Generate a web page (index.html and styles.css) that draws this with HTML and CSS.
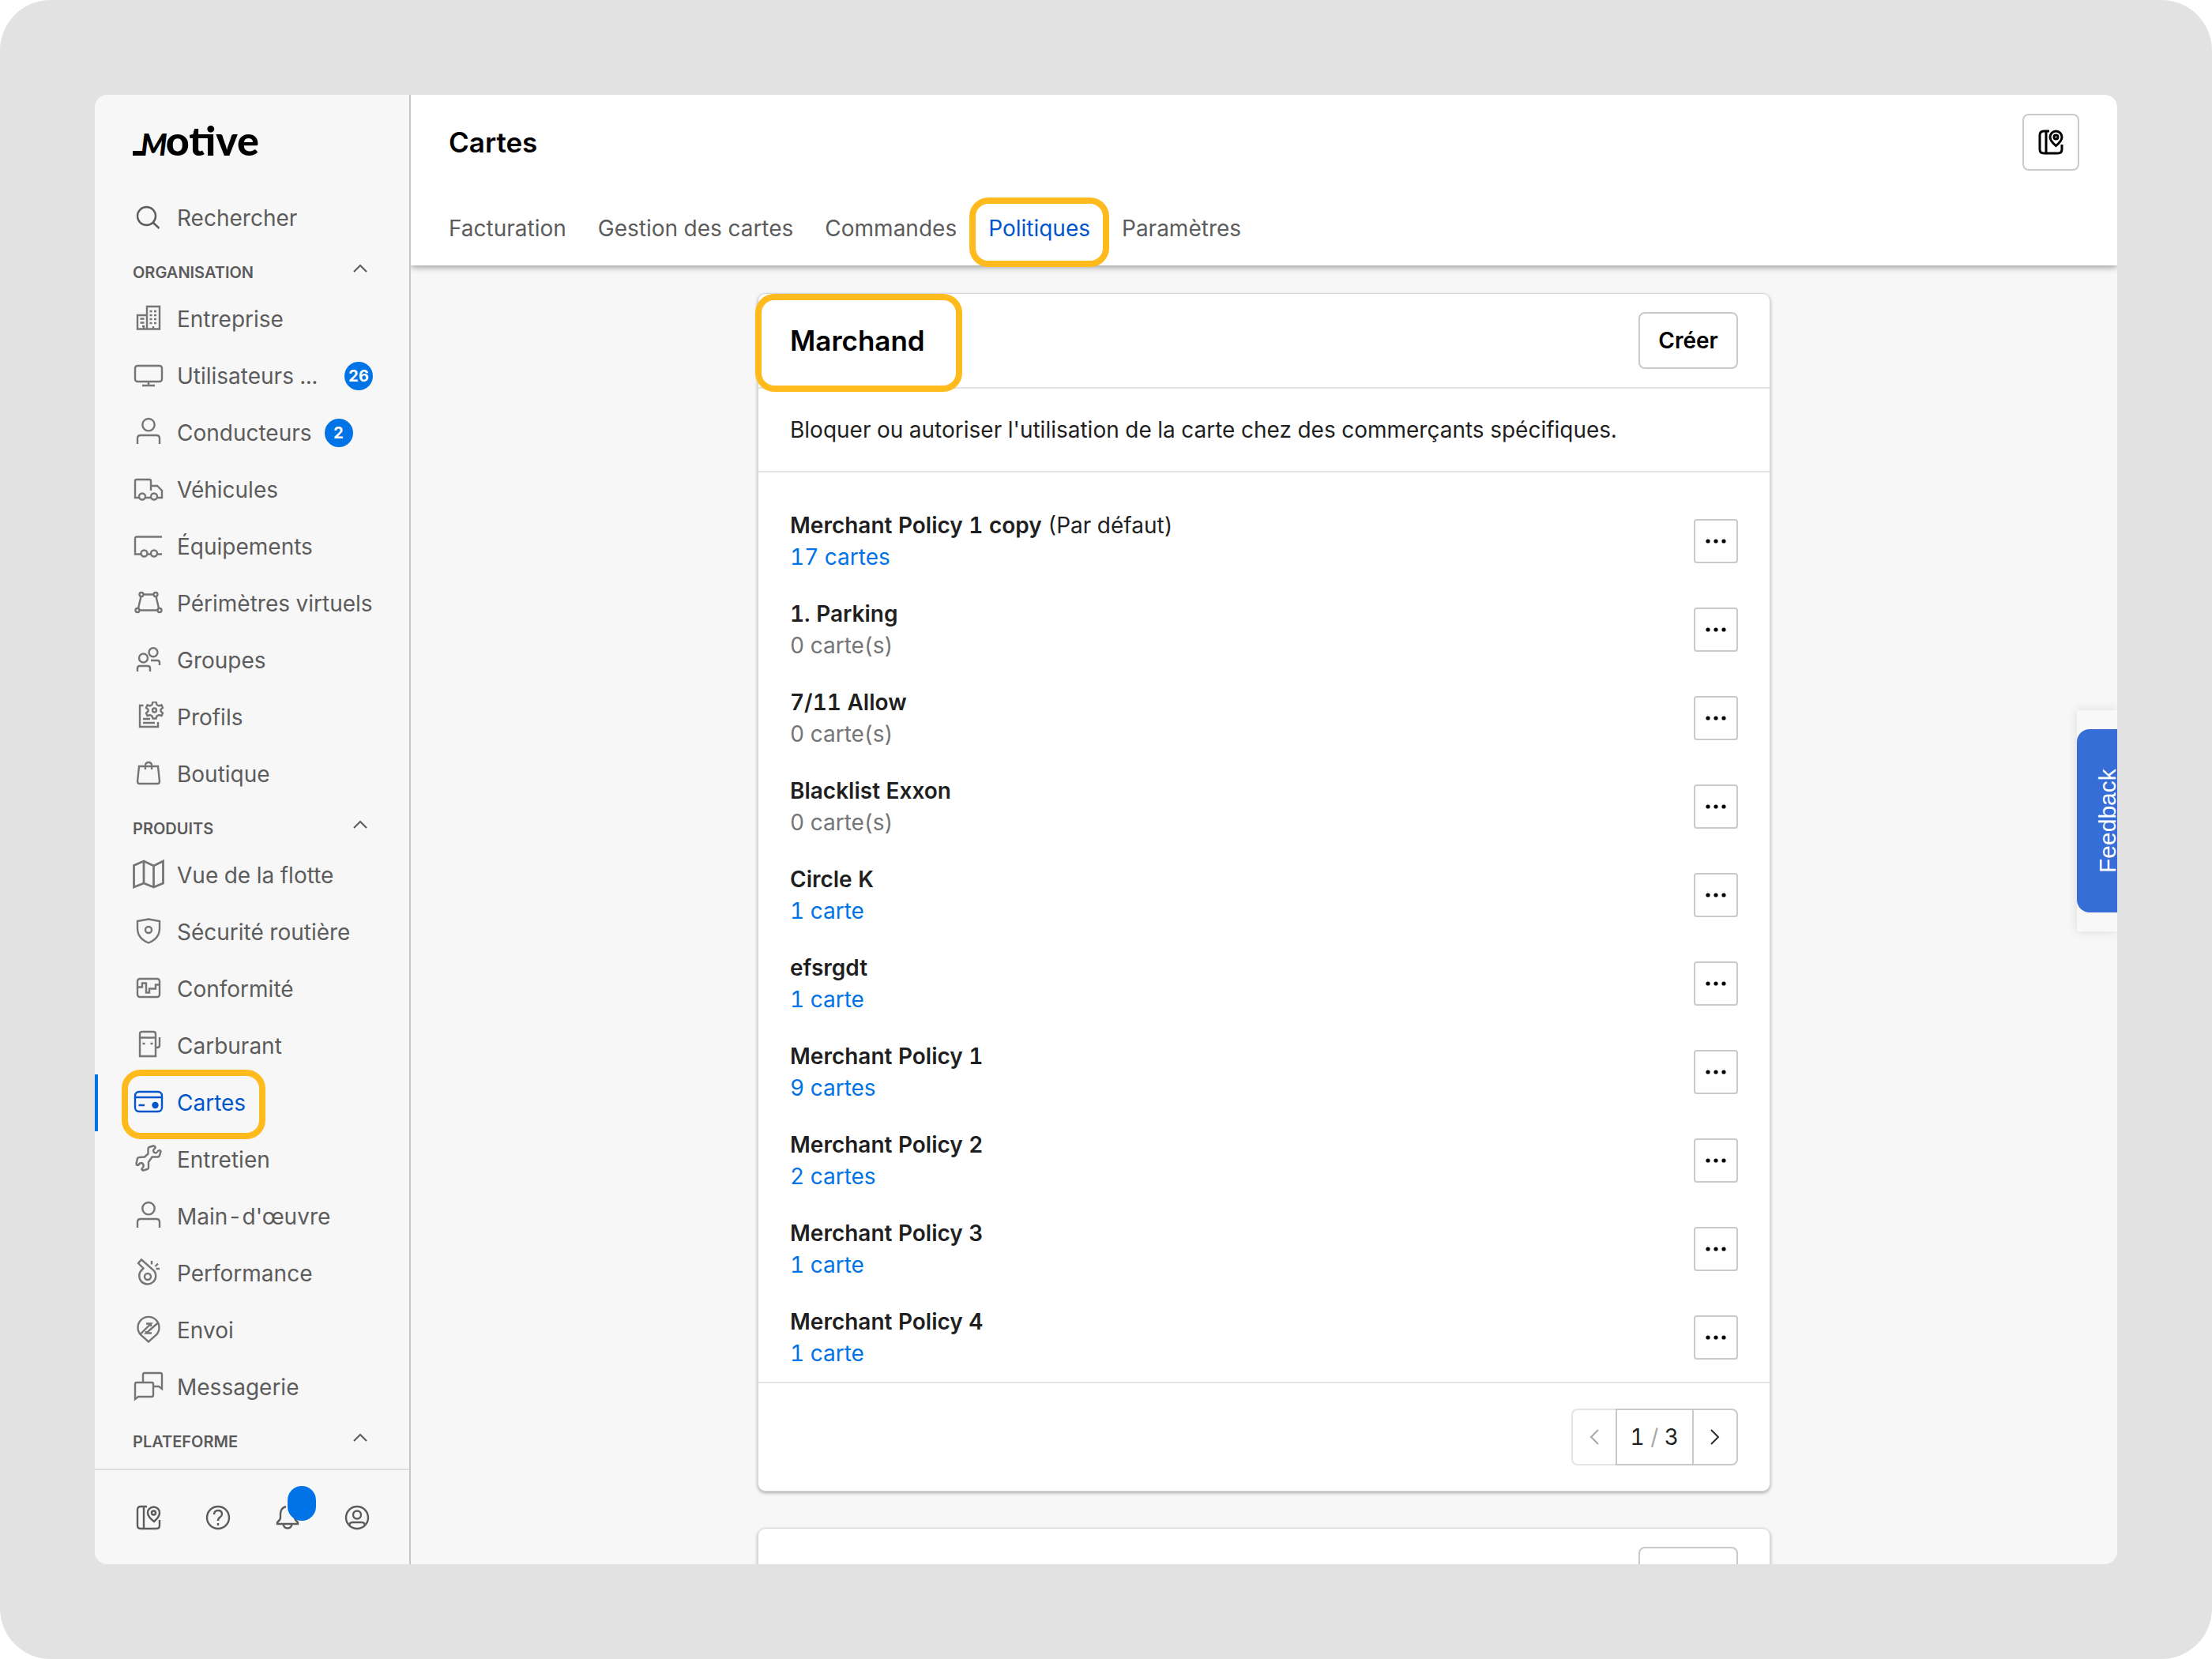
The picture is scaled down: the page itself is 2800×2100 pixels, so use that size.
FILE: index.html
```html
<!DOCTYPE html>
<html lang="fr">
<head>
    <meta charset="UTF-8">
    <meta name="viewport" content="width=device-width, initial-scale=1.0">
    <title>Motive - Cartes</title>
    <link rel="stylesheet" href="styles.css">
</head>
<body>
    <div class="app">
        <aside class="sidebar">
            <a href="/" class="logo"><span class="logo-m">M</span><span class="logo-rest">otive</span></a>

            <nav class="menu">
                <a href="#" class="menu-item">
                    <svg class="icon icon-dark" viewBox="0 0 40 40"><circle cx="17.500" cy="17.500" r="11.500"/><path d="M25.500 25.500l8 7.500"/></svg>
                    <span>Rechercher</span>
                </a>

                <button class="menu-title" type="button">
                    <span>ORGANISATION</span>
                    <svg class="chevron" viewBox="0 0 32 20"><path d="M8 14l8-8 8 8"/></svg>
                </button>
                <a href="#" class="menu-item">
                    <svg class="icon" viewBox="0 0 40 40"><path d="M6 32.500V15h12v17.500zM18 32.500V4h16v28.500z"/><path d="M9.500 19.500h5M9.500 24.500h5M12 29h2v3M21.500 10h3M27 10h3M21.500 15h3M27 15h3M21.500 20h3M27 20h3M21.500 25h3M27 25h3M26 29v3"/></svg>
                    <span>Entreprise</span>
                </a>
                <a href="#" class="menu-item">
                    <svg class="icon" viewBox="0 0 40 40"><rect x="3" y="7" width="34" height="20" rx="3"/><path d="M20 27v5M12 32h16"/></svg>
                    <span class="grow">Utilisateurs ...</span>
                    <span class="badge">26</span>
                </a>
                <a href="#" class="menu-item">
                    <svg class="icon" viewBox="0 0 40 40"><circle cx="20" cy="9.700" r="7.700"/><path d="M6 34v-7q0-4 4-4h20q4 0 4 4v7"/></svg>
                    <span>Conducteurs</span>
                    <span class="badge">2</span>
                </a>
                <a href="#" class="menu-item">
                    <svg class="icon" viewBox="0 0 40 40"><path d="M8 30H3V9q0-2 2-2h16q2 0 2 2v12M16 30h7M31 30h6v-9l-6-6h-8"/><circle cx="12" cy="28.500" r="4"/><circle cx="27" cy="28.500" r="4"/></svg>
                    <span>Véhicules</span>
                </a>
                <a href="#" class="menu-item">
                    <svg class="icon" viewBox="0 0 40 40"><path d="M37 7.500H5q-2 0-2 2v20h7.500M18.500 29.500h4.500M31 29.500h6"/><circle cx="14.500" cy="28.500" r="4"/><circle cx="27" cy="28.500" r="4"/></svg>
                    <span>Équipements</span>
                </a>
                <a href="#" class="menu-item">
                    <svg class="icon" viewBox="0 0 40 40"><circle cx="11" cy="8.500" r="2.500"/><circle cx="29" cy="8.500" r="2.500"/><circle cx="6" cy="28.500" r="2.500"/><circle cx="34" cy="28.500" r="2.500"/><path d="M13.500 8.500h13M8.500 28.500h23M10.500 11L7 26M29.500 11L33 26"/></svg>
                    <span>Périmètres virtuels</span>
                </a>
                <a href="#" class="menu-item">
                    <svg class="icon" viewBox="0 0 40 40"><circle cx="13.500" cy="17" r="5.500"/><circle cx="26" cy="9.700" r="5.500"/><path d="M6 34v-4q0-3 3-3h10q3 0 3 3v4M23 20h8q3 0 3 3v3"/></svg>
                    <span>Groupes</span>
                </a>
                <a href="#" class="menu-item">
                    <svg class="icon" viewBox="0 0 40 40"><path d="M13.500 5H9v27h23v-6M13 22h9M13 27h15"/><path d="M25.500.500h4l1 3.500 2.500 1.500 3.500-1 1.500 3.500-2.500 2v2.500l2.500 2-1.500 3.500-3.500-1-2.500 1.500-1 3h-4l-1-3-2.500-1.500-3.500 1-1.500-3.500 2.500-2V10l-2.500-2L18.500 4.500l3.500 1L24.500 4z"/><circle cx="27.500" cy="11" r="2.500"/></svg>
                    <span>Profils</span>
                </a>
                <a href="#" class="menu-item">
                    <svg class="icon" viewBox="0 0 40 40"><path d="M8 10h24l2 19q0 3-3 3H9q-3 0-3-3zM16 14V9q0-4 4-4t4 4v5"/></svg>
                    <span>Boutique</span>
                </a>

                <button class="menu-title" type="button">
                    <span>PRODUITS</span>
                    <svg class="chevron" viewBox="0 0 32 20"><path d="M8 14l8-8 8 8"/></svg>
                </button>
                <a href="#" class="menu-item">
                    <svg class="icon" viewBox="0 0 40 40"><path class="thick" d="M1.500 7.500L14 2l12.500 6L38.500 2v28L26.500 35 14 30 1.500 35zM14 2v28M26.500 8v27"/></svg>
                    <span>Vue de la flotte</span>
                </a>
                <a href="#" class="menu-item">
                    <svg class="icon" viewBox="0 0 40 40"><path d="M6 6l14-2.500L34 6v9q0 13-14 18.500Q6 28 6 15z"/><circle cx="20" cy="17" r="4"/></svg>
                    <span>Sécurité routière</span>
                </a>
                <a href="#" class="menu-item">
                    <svg class="icon" viewBox="0 0 40 40"><rect x="6" y="7" width="28" height="23" rx="3"/><path d="M6 17.500h6v-5h5v12h4v-5h8v-5h5"/></svg>
                    <span>Conformité</span>
                </a>
                <a href="#" class="menu-item">
                    <svg class="icon" viewBox="0 0 40 40"><path d="M9 33V5q0-3 3-3h14q3 0 3 3v28zM9 9.500h20M29 22h2q3 0 3-3V9M12.500 17h3M22.500 17h3"/></svg>
                    <span>Carburant</span>
                </a>
                <a href="#" class="menu-item active">
                    <svg class="icon" viewBox="0 0 40 40"><rect x="3" y="6" width="34" height="25" rx="5"/><path d="M3 13h34M7.500 23h7.500"/><circle class="dot" cx="28.500" cy="23" r="3"/></svg>
                    <span>Cartes</span>
                    <i class="highlight highlight-menu"></i>
                </a>
                <a href="#" class="menu-item">
                    <svg class="icon" viewBox="0 0 40 40"><path d="M19.500 6.500q0-2 1.500-2.500l5-1.500q2 0 2.500 1.500t-1.500 2.500l-1 2q0 2 2.500 3 2 0 3.500-2.500 3-2 3.500.500l-1.500 5q-.5 2-2.500 2h-7L20 23v7q0 1.500-1.500 2l-5 1.500q-2 0-2-2l2-2.500q1-3-2-5-3 0-4 2.500-3 1-3-1.500L6 18.500q.5-1.500 2-1.500l7-.500 4.500-4z"/></svg>
                    <span>Entretien</span>
                </a>
                <a href="#" class="menu-item">
                    <svg class="icon" viewBox="0 0 40 40"><circle cx="20" cy="9.700" r="7.700"/><path d="M6 34v-7q0-4 4-4h20q4 0 4 4v7"/></svg>
                    <span>Main-d'œuvre</span>
                </a>
                <a href="#" class="menu-item">
                    <svg class="icon" viewBox="0 0 40 40"><path d="M11 2.500l15.500 13.500a10.500 10.500 0 1 1-14.500-1l1.500-1.500L7 7z"/><circle cx="19" cy="24" r="4"/><path d="M24 4v4.500M32 7.500l-3.500 3.500M29.500 14h4.500"/></svg>
                    <span>Performance</span>
                </a>
                <a href="#" class="menu-item">
                    <svg class="icon" viewBox="0 0 40 40"><path d="M20 34.500l-9.500-8.500a13.500 13.500 0 1 1 19 0zM9 25.500l14-14h-6M32 10.500l-15 13h7M23 11.500v3.500M17 24v-3"/></svg>
                    <span>Envoi</span>
                </a>
                <a href="#" class="menu-item">
                    <svg class="icon" viewBox="0 0 40 40"><path d="M13 13V4q0-2 2-2h20q2 0 2 2v18l-4-3h-6"/><path d="M3 35V16q0-2 2-2h19q2 0 2 2v14q0 2-2 2H7z"/></svg>
                    <span>Messagerie</span>
                </a>

                <button class="menu-title" type="button">
                    <span>PLATEFORME</span>
                    <svg class="chevron" viewBox="0 0 32 20"><path d="M8 14l8-8 8 8"/></svg>
                </button>
            </nav>

            <div class="sidebar-footer">
                <button class="tool" type="button" aria-label="Guide">
                    <svg class="icon icon-dark" viewBox="0 0 40 40"><path d="M18 6h-8q-4 0-4 4v20q0 4 4 4h20q4 0 4-4v-7M14 6v28M27 25q-8-6-8-11a7.500 7.500 0 0 1 15 0q0 5-7 11z"/><circle cx="26.500" cy="14" r="2.500"/></svg>
                </button>
                <button class="tool" type="button" aria-label="Aide">
                    <svg class="icon icon-dark" viewBox="0 0 40 40"><circle cx="20" cy="20" r="14"/><path d="M15 16q0-5 5-5t5 4.500q0 2.500-2.500 4T20 24M20 27v3"/></svg>
                </button>
                <button class="tool" type="button" aria-label="Notifications">
                    <svg class="icon icon-dark" viewBox="0 0 40 40"><path d="M18 6q-7 2-7 9v5q0 3-4 6v2h26v-2q-4-3-4-6v-5M14.500 28.500q1 5 5.500 5t5.500-5"/></svg>
                    <i class="tool-badge"></i>
                </button>
                <button class="tool" type="button" aria-label="Compte">
                    <svg class="icon icon-dark" viewBox="0 0 40 40"><circle cx="20" cy="20" r="14"/><circle cx="20" cy="16.500" r="5"/><path d="M10.500 30v-2q1-2 4-2h11q3 0 4 2v2"/></svg>
                </button>
            </div>
        </aside>

        <div class="main">
            <header class="header">
                <div class="header-top">
                    <h1>Cartes</h1>
                    <button class="btn btn-guide" type="button" aria-label="Guide">
                        <svg class="icon icon-black" viewBox="0 0 40 40"><path d="M18 6h-7q-5 0-5 5v18q0 5 5 5h18q5 0 5-5v-6M14 6v28M26.500 24.500q-7.500-6-7.500-11a7.500 7.500 0 0 1 15 0q0 5-7.500 11z"/><circle cx="26.500" cy="13.500" r="2.500"/></svg>
                    </button>
                </div>
                <nav class="tabs">
                    <a href="#">Facturation</a>
                    <a href="#">Gestion des cartes</a>
                    <a href="#">Commandes</a>
                    <a href="#" class="active">Politiques<i class="highlight highlight-tab"></i></a>
                    <a href="#">Paramètres</a>
                </nav>
            </header>

            <main class="content">
                <section class="card">
                    <div class="card-header">
                        <h2>Marchand</h2>
                        <button class="btn" type="button">Créer</button>
                        <i class="highlight highlight-title"></i>
                    </div>
                    <p class="card-text">Bloquer ou autoriser l'utilisation de la carte chez des commerçants spécifiques.</p>
                    <ul class="policies">
                        <li>
                            <div class="policy"><div><b>Merchant Policy 1 copy</b> (Par défaut)</div><a href="#">17 cartes</a></div>
                            <button class="btn btn-more" type="button" aria-label="Plus"><svg viewBox="0 0 26 6"><circle cx="3" cy="3" r="2.600"/><circle cx="13" cy="3" r="2.600"/><circle cx="23" cy="3" r="2.600"/></svg></button>
                        </li>
                        <li>
                            <div class="policy"><b>1. Parking</b><span>0 carte(s)</span></div>
                            <button class="btn btn-more" type="button" aria-label="Plus"><svg viewBox="0 0 26 6"><circle cx="3" cy="3" r="2.600"/><circle cx="13" cy="3" r="2.600"/><circle cx="23" cy="3" r="2.600"/></svg></button>
                        </li>
                        <li>
                            <div class="policy"><b>7/11 Allow</b><span>0 carte(s)</span></div>
                            <button class="btn btn-more" type="button" aria-label="Plus"><svg viewBox="0 0 26 6"><circle cx="3" cy="3" r="2.600"/><circle cx="13" cy="3" r="2.600"/><circle cx="23" cy="3" r="2.600"/></svg></button>
                        </li>
                        <li>
                            <div class="policy"><b>Blacklist Exxon</b><span>0 carte(s)</span></div>
                            <button class="btn btn-more" type="button" aria-label="Plus"><svg viewBox="0 0 26 6"><circle cx="3" cy="3" r="2.600"/><circle cx="13" cy="3" r="2.600"/><circle cx="23" cy="3" r="2.600"/></svg></button>
                        </li>
                        <li>
                            <div class="policy"><b>Circle K</b><a href="#">1 carte</a></div>
                            <button class="btn btn-more" type="button" aria-label="Plus"><svg viewBox="0 0 26 6"><circle cx="3" cy="3" r="2.600"/><circle cx="13" cy="3" r="2.600"/><circle cx="23" cy="3" r="2.600"/></svg></button>
                        </li>
                        <li>
                            <div class="policy"><b>efsrgdt</b><a href="#">1 carte</a></div>
                            <button class="btn btn-more" type="button" aria-label="Plus"><svg viewBox="0 0 26 6"><circle cx="3" cy="3" r="2.600"/><circle cx="13" cy="3" r="2.600"/><circle cx="23" cy="3" r="2.600"/></svg></button>
                        </li>
                        <li>
                            <div class="policy"><b>Merchant Policy 1</b><a href="#">9 cartes</a></div>
                            <button class="btn btn-more" type="button" aria-label="Plus"><svg viewBox="0 0 26 6"><circle cx="3" cy="3" r="2.600"/><circle cx="13" cy="3" r="2.600"/><circle cx="23" cy="3" r="2.600"/></svg></button>
                        </li>
                        <li>
                            <div class="policy"><b>Merchant Policy 2</b><a href="#">2 cartes</a></div>
                            <button class="btn btn-more" type="button" aria-label="Plus"><svg viewBox="0 0 26 6"><circle cx="3" cy="3" r="2.600"/><circle cx="13" cy="3" r="2.600"/><circle cx="23" cy="3" r="2.600"/></svg></button>
                        </li>
                        <li>
                            <div class="policy"><b>Merchant Policy 3</b><a href="#">1 carte</a></div>
                            <button class="btn btn-more" type="button" aria-label="Plus"><svg viewBox="0 0 26 6"><circle cx="3" cy="3" r="2.600"/><circle cx="13" cy="3" r="2.600"/><circle cx="23" cy="3" r="2.600"/></svg></button>
                        </li>
                        <li>
                            <div class="policy"><b>Merchant Policy 4</b><a href="#">1 carte</a></div>
                            <button class="btn btn-more" type="button" aria-label="Plus"><svg viewBox="0 0 26 6"><circle cx="3" cy="3" r="2.600"/><circle cx="13" cy="3" r="2.600"/><circle cx="23" cy="3" r="2.600"/></svg></button>
                        </li>
                    </ul>
                    <div class="card-footer">
                        <button class="page-btn page-prev" type="button" aria-label="Page précédente" disabled><svg viewBox="0 0 14 24"><path d="M12 3l-9 9 9 9"/></svg></button>
                        <div class="page-count">1 <span>/</span> 3</div>
                        <button class="page-btn page-next" type="button" aria-label="Page suivante"><svg viewBox="0 0 14 24"><path d="M2 3l9 9-9 9"/></svg></button>
                    </div>
                </section>

                <section class="card">
                    <div class="card-header">
                        <button class="btn" type="button" aria-label="Créer"></button>
                    </div>
                </section>
            </main>
        </div>

        <div class="feedback">
            <button type="button">Feedback</button>
        </div>
    </div>
</body>
</html>
```

FILE: styles.css
```css
* {
    box-sizing: border-box;
}
html {
    background-color: #fff;
}
body {
    margin: 0;
    height: 100vh;
    padding: 120px;
    background-color: #e2e2e2;
    border-radius: 64px;
    font-family: Inter, "Liberation Sans", sans-serif;
    font-size: 28px;
    font-variant-numeric: tabular-nums;
    line-height: 40px;
    color: #1f1f1f;
}
a {
    color: #0073e6;
    text-decoration: none;
}
button {
    font: inherit;
    color: inherit;
    cursor: pointer;
}
.app {
    position: relative;
    display: flex;
    height: 100%;
    overflow: hidden;
    border-radius: 16px;
    background-color: #f7f7f7;
}

/* sidebar */
.sidebar {
    position: relative;
    z-index: 2;
    display: flex;
    flex-direction: column;
    flex: none;
    width: 400px;
    border-right: 2px solid #c6c6c6;
    background-color: #f7f7f7;
    color: #5c5c5c;
}
.logo {
    display: flex;
    align-items: baseline;
    height: 120px;
    padding: 32px 48px 0;
    color: #000;
    font-family: Lato, sans-serif;
    font-weight: 900;
    line-height: 50px;
}
.logo::before {
    content: "";
    width: 16px;
    height: 6px;
    background-color: #000;
}
.logo-m {
    margin-left: -6px;
    font-size: 38px;
    font-style: italic;
}
.logo-rest {
    margin-left: -2px;
    font-size: 52px;
}
.menu {
    flex: 1;
    min-height: 0;
    overflow: hidden;
}
.menu-item {
    position: relative;
    display: flex;
    align-items: center;
    gap: 16px;
    height: 72px;
    padding: 0 46px 0 48px;
    color: inherit;
    white-space: nowrap;
}
.menu-item.active {
    color: #0055cc;
    border-left: 4px solid #0073e6;
    padding-left: 44px;
}
.grow {
    flex: 1;
}
.menu-title {
    display: flex;
    align-items: center;
    justify-content: space-between;
    width: 100%;
    height: 56px;
    padding: 0 46px 0 48px;
    border: 0;
    background: none;
    font-size: 20px;
    font-weight: 600;
}
.menu-title span {
    padding-top: 10px;
}
.icon {
    flex: none;
    width: 40px;
    height: 40px;
    fill: none;
    stroke: #757575;
    stroke-width: 6%;
}
.icon .thick {
    stroke-width: 7%;
}
.icon-dark {
    stroke: #5c5c5c;
}
.icon-black {
    stroke: #000;
    stroke-width: 3px;
}
.active .icon {
    stroke: #0055cc;
}
.active .dot {
    fill: #0055cc;
}
.chevron {
    width: 32px;
    height: 20px;
    fill: none;
    stroke: #5c5c5c;
    stroke-width: 2px;
}
.badge {
    min-width: 36px;
    height: 36px;
    border-radius: 18px;
    background-color: #0073e6;
    color: #fff;
    font-size: 20px;
    font-weight: 700;
    line-height: 36px;
    text-align: center;
}
.sidebar-footer {
    display: flex;
    align-items: center;
    gap: 48px;
    height: 121px;
    padding: 0 48px;
    border-top: 2px solid #dedede;
}
.tool {
    position: relative;
    display: flex;
    padding: 0;
    border: 0;
    background: none;
}
.tool-badge {
    position: absolute;
    left: 20px;
    bottom: 16px;
    width: 36px;
    height: 44px;
    border-radius: 18px;
    background-color: #0073e6;
}

/* yellow guide frames */
.highlight {
    position: absolute;
    z-index: 2;
    border: 8px solid #ffbb1e;
    border-radius: 24px;
    pointer-events: none;
}
.highlight-menu {
    left: 30px;
    top: -6px;
    width: 182px;
    height: 88px;
}
.highlight-tab {
    left: -24px;
    right: -24px;
    top: -19px;
    height: 88px;
}
.highlight-title {
    left: -4px;
    top: 0;
    width: 262px;
    height: 124px;
}

/* header */
.main {
    display: flex;
    flex-direction: column;
    flex: 1;
    min-width: 0;
}
.header {
    position: relative;
    z-index: 1;
    flex: none;
    height: 216px;
    padding: 24px 48px 0;
    background-color: #fff;
    box-shadow: 0 2px 8px rgba(0, 0, 0, 0.4);
}
.header-top {
    display: flex;
    align-items: center;
    justify-content: space-between;
}
h1,
h2 {
    margin: 0;
    color: #000;
    font-size: 35px;
    font-weight: 600;
}
.tabs {
    display: flex;
    gap: 40px;
    margin-top: 53px;
}
.tabs a {
    position: relative;
    color: #5c5c5c;
}
.tabs a.active {
    color: #0055cc;
}
.btn {
    display: flex;
    align-items: center;
    justify-content: center;
    min-width: 126px;
    height: 72px;
    padding: 0 20px;
    border: 2px solid #c9c9c9;
    border-radius: 8px;
    background-color: #fff;
    color: #000;
    font-weight: 600;
}
.btn-guide {
    min-width: 72px;
    padding: 0;
}

/* cards */
.content {
    flex: 1;
    min-height: 0;
    padding-top: 35px;
    overflow: hidden;
}
.card {
    width: 60%;
    max-width: 1282px;
    margin: 0 auto 46px;
    border: 1px solid #d6d6d6;
    border-radius: 10px;
    background-color: #fff;
    box-shadow: 0 2px 4px rgba(0, 0, 0, 0.3);
}
.card-header {
    position: relative;
    display: flex;
    align-items: center;
    height: 120px;
    padding: 0 40px;
    border-bottom: 2px solid #e4e4e4;
}
.card-header .btn {
    margin-left: auto;
}
.card-text {
    margin: 0;
    padding: 32px 40px;
    border-bottom: 2px solid #e4e4e4;
}
.policies {
    margin: 0;
    padding: 31px 40px 0;
    list-style: none;
}
.policies li {
    display: flex;
    align-items: center;
    justify-content: space-between;
    height: 112px;
}
.policy {
    display: flex;
    flex-direction: column;
}
.policy b {
    font-weight: 600;
}
.policy span {
    color: #757575;
}
.btn-more {
    min-width: 56px;
    height: 56px;
    padding: 0;
    border-radius: 4px;
}
.btn-more svg {
    width: 26px;
    height: 6px;
}
.card-footer {
    display: flex;
    align-items: center;
    justify-content: flex-end;
    height: 138px;
    padding: 0 40px;
    border-top: 2px solid #e4e4e4;
}
.page-btn {
    display: flex;
    align-items: center;
    justify-content: center;
    width: 56px;
    height: 72px;
    padding: 0;
    border: 2px solid #c9c9c9;
    background-color: #fff;
}
.page-btn svg {
    width: 14px;
    height: 24px;
    fill: none;
    stroke: #2b2b2b;
    stroke-width: 2px;
}
.page-prev {
    border-color: #e4e4e4;
    border-right: 0;
    border-radius: 8px 0 0 8px;
}
.page-prev svg {
    stroke: #a8a8a8;
}
.page-next {
    border-left: 0;
    border-radius: 0 8px 8px 0;
}
.page-count {
    height: 72px;
    padding: 0 17px;
    border: 2px solid #c9c9c9;
    line-height: 68px;
}
.page-count span {
    color: #a8a8a8;
}

/* feedback tab on the right edge */
.feedback {
    position: absolute;
    right: 0;
    top: 779px;
    z-index: 3;
    width: 51px;
    padding: 24px 0;
    background-color: #f8f8f8;
    box-shadow: 0 0 12px rgba(0, 0, 0, 0.12);
}
.feedback button {
    display: block;
    width: 78px;
    height: 232px;
    padding: 0;
    border: 0;
    border-radius: 0 16px 16px 0;
    background-color: #376dd6;
    color: #fff;
    font-family: "Liberation Sans", Arial, sans-serif;
    font-size: 30px;
    writing-mode: vertical-rl;
    transform: rotate(180deg);
}
```
